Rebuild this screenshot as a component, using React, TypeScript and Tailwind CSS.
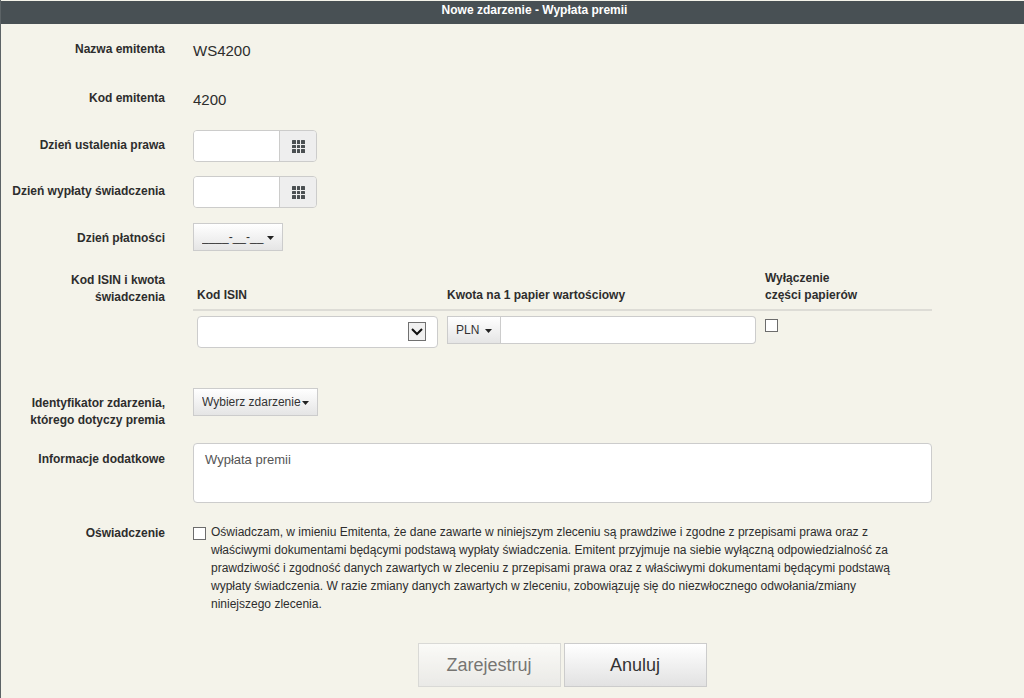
import type { ReactNode } from 'react'

interface RowProps {
	label: string
	htmlFor?: string
	className: string
	labelClassName?: string
	children: ReactNode
}

function Row({ label, htmlFor, className, labelClassName = '', children }: RowProps) {
	const labelClasses = `text-right font-bold whitespace-pre-line ${labelClassName}`

	return (
		<div className={`grid grid-cols-[164px_minmax(0,1fr)] gap-x-7 ${className}`}>
			{htmlFor ? (
				<label htmlFor={htmlFor} className={labelClasses}>
					{label}
				</label>
			) : (
				<span className={labelClasses}>{label}</span>
			)}
			<div className="min-w-0">{children}</div>
		</div>
	)
}

function GridIcon() {
	const cells = [0, 5, 9]
	return (
		<svg width="13" height="13" viewBox="0 0 13 13" fill="#4b5052" aria-hidden="true">
			{cells.map(y =>
				cells.map(x => (
					<rect
						key={`${x}-${y}`}
						x={x}
						y={y}
						width={x === 5 ? 3 : 4}
						height={y === 5 ? 3 : 4}
						rx="0.5"
					/>
				)),
			)}
		</svg>
	)
}

function DateInput({ id }: { id: string }) {
	return (
		<div className="flex h-8 w-[124px] overflow-hidden rounded border border-[#cccccb]">
			<input id={id} type="text" className="min-w-0 flex-1 bg-white px-2 outline-none" />
			<button
				type="button"
				aria-label="Kalendarz"
				className="flex w-[37px] items-center justify-center border-l border-[#cccccb] bg-[#eeeeee]"
			>
				<GridIcon />
			</button>
		</div>
	)
}

interface DropdownProps {
	id: string
	value: string
	ariaLabel?: string
	className: string
}

function Dropdown({ id, value, ariaLabel, className }: DropdownProps) {
	return (
		<div className={`relative h-7 ${className}`}>
			<select
				id={id}
				aria-label={ariaLabel}
				className="h-full w-full appearance-none border border-[#cccccc] bg-linear-to-b from-white to-[#e5e5e5] pl-2 text-[#333333]"
			>
				<option>{value}</option>
			</select>
			<svg
				width="7"
				height="4"
				viewBox="0 0 7 4"
				className="pointer-events-none absolute top-[13px] right-[9px]"
				aria-hidden="true"
			>
				<path d="M0 0h7L3.5 4z" fill="#222" />
			</svg>
		</div>
	)
}

function Checkbox({ id, ariaLabel }: { id: string; ariaLabel?: string }) {
	return (
		<input
			id={id}
			type="checkbox"
			aria-label={ariaLabel}
			className="block size-[13px] shrink-0 appearance-none border border-[#6c6c6c] bg-white checked:bg-[#485054]"
		/>
	)
}

export default function App() {
	return (
		<main className="min-h-screen border-l border-[#5c6366] bg-[#f4f3ea] pt-px font-['Liberation_Sans',Arial,sans-serif] text-[12px] leading-[17px] text-[#2d2d2d]">
			<h1 className="h-[23px] bg-[#485054] pl-11 text-center leading-[18px] font-bold text-white">
				Nowe zdarzenie - Wypłata premii
			</h1>

			<form className="pt-4 pr-[92px] pb-3">
				<Row label="Nazwa emitenta" className="h-[49px]" labelClassName="pt-px">
					<span className="block pt-px text-[15px] leading-5">WS4200</span>
				</Row>
				<Row label="Kod emitenta" className="h-[41px]" labelClassName="pt-px">
					<span className="block pt-px text-[15px] leading-5">4200</span>
				</Row>
				<Row label="Dzień ustalenia prawa" htmlFor="record-date" className="h-[46px]" labelClassName="pt-[7px]">
					<DateInput id="record-date" />
				</Row>
				<Row label="Dzień wypłaty świadczenia" htmlFor="benefit-date" className="h-[47px]" labelClassName="pt-[7px]">
					<DateInput id="benefit-date" />
				</Row>
				<Row label="Dzień płatności" htmlFor="payment-date" className="h-[47px]" labelClassName="pt-[7px]">
					<Dropdown id="payment-date" value="____-__-__" className="w-[90px]" />
				</Row>

				<Row label={'Kod ISIN i kwota\nświadczenia'} className="min-h-[118px]" labelClassName="pt-[2px]">
					<table className="w-full table-fixed text-left">
						<thead>
							<tr className="border-b-2 border-[#dddcd6] align-bottom">
								<th className="w-[250px] pb-[5px] pl-1">Kod ISIN</th>
								<th className="pb-[5px] pl-1">Kwota na 1 papier wartościowy</th>
								<th className="w-[171px] pb-[5px] pl-1">
									Wyłączenie
									<br />
									części papierów
								</th>
							</tr>
						</thead>
						<tbody>
							<tr className="align-top">
								<td className="pt-[5px] pr-[5px] pl-1">
									<div className="relative h-8">
										<select
											aria-label="Kod ISIN"
											className="h-full w-full appearance-none rounded border border-[#cccccc] bg-white px-2"
										>
											<option></option>
										</select>
										<span className="pointer-events-none absolute top-[6px] right-3 flex h-[19px] w-[18px] items-center justify-center border border-[#707070] bg-[#f0f0f0]">
											<svg width="12" height="8" viewBox="0 0 12 8" fill="none" aria-hidden="true">
												<path d="M1 1l5 5 5-5" stroke="#111" strokeWidth="2" />
											</svg>
										</span>
									</div>
								</td>
								<td className="pt-[5px] pr-[5px] pl-1">
									<div className="flex">
										<Dropdown id="currency" ariaLabel="Waluta" value="PLN" className="w-[54px]" />
										<input
											type="text"
											aria-label="Kwota na 1 papier wartościowy"
											className="h-7 min-w-0 flex-1 rounded-r border border-l-0 border-[#cccccc] bg-white px-2"
										/>
									</div>
								</td>
								<td className="pt-2 pl-1">
									<Checkbox id="exclusion" ariaLabel="Wyłączenie części papierów" />
								</td>
							</tr>
						</tbody>
					</table>
				</Row>

				<Row
					label={'Identyfikator zdarzenia,\nktórego dotyczy premia'}
					htmlFor="event"
					className="min-h-[55px]"
					labelClassName="pt-[7px]"
				>
					<Dropdown id="event" value="Wybierz zdarzenie" className="w-[125px]" />
				</Row>
				<Row label="Informacje dodatkowe" htmlFor="info" className="min-h-[80px]" labelClassName="pt-2">
					<textarea
						id="info"
						defaultValue="Wypłata premii"
						className="block h-[60px] w-full resize-none rounded border border-[#cccccc] bg-white px-[11px] py-[7px] text-[13px] leading-[18px] text-[#555555]"
					/>
				</Row>
				<Row label="Oświadczenie" htmlFor="statement" className="min-h-[120px]" labelClassName="pt-[2px]">
					<div className="flex items-start gap-[5px]">
						<div className="pt-1">
							<Checkbox id="statement" />
						</div>
						<label htmlFor="statement" className="max-w-[700px] leading-[18px]">
							Oświadczam, w imieniu Emitenta, że dane zawarte w niniejszym zleceniu są prawdziwe i zgodne z
							przepisami prawa oraz z właściwymi dokumentami będącymi podstawą wypłaty świadczenia. Emitent
							przyjmuje na siebie wyłączną odpowiedzialność za prawdziwość i zgodność danych zawartych w zleceniu
							z przepisami prawa oraz z właściwymi dokumentami będącymi podstawą wypłaty świadczenia. W razie
							zmiany danych zawartych w zleceniu, zobowiązuję się do niezwłocznego odwołania/zmiany niniejszego
							zlecenia.
						</label>
					</div>
				</Row>

				<div className="flex justify-center gap-[3px] pl-[191px] text-[18px]">
					<button
						type="button"
						disabled
						className="h-11 w-[143px] border border-[#cccccc] bg-linear-to-b from-white to-[#e5e5e5] text-[#333333] opacity-65"
					>
						Zarejestruj
					</button>
					<button
						type="button"
						className="h-11 w-[143px] border border-[#cccccc] bg-linear-to-b from-white to-[#e2e2e2] text-[#333333]"
					>
						Anuluj
					</button>
				</div>
			</form>
		</main>
	)
}
